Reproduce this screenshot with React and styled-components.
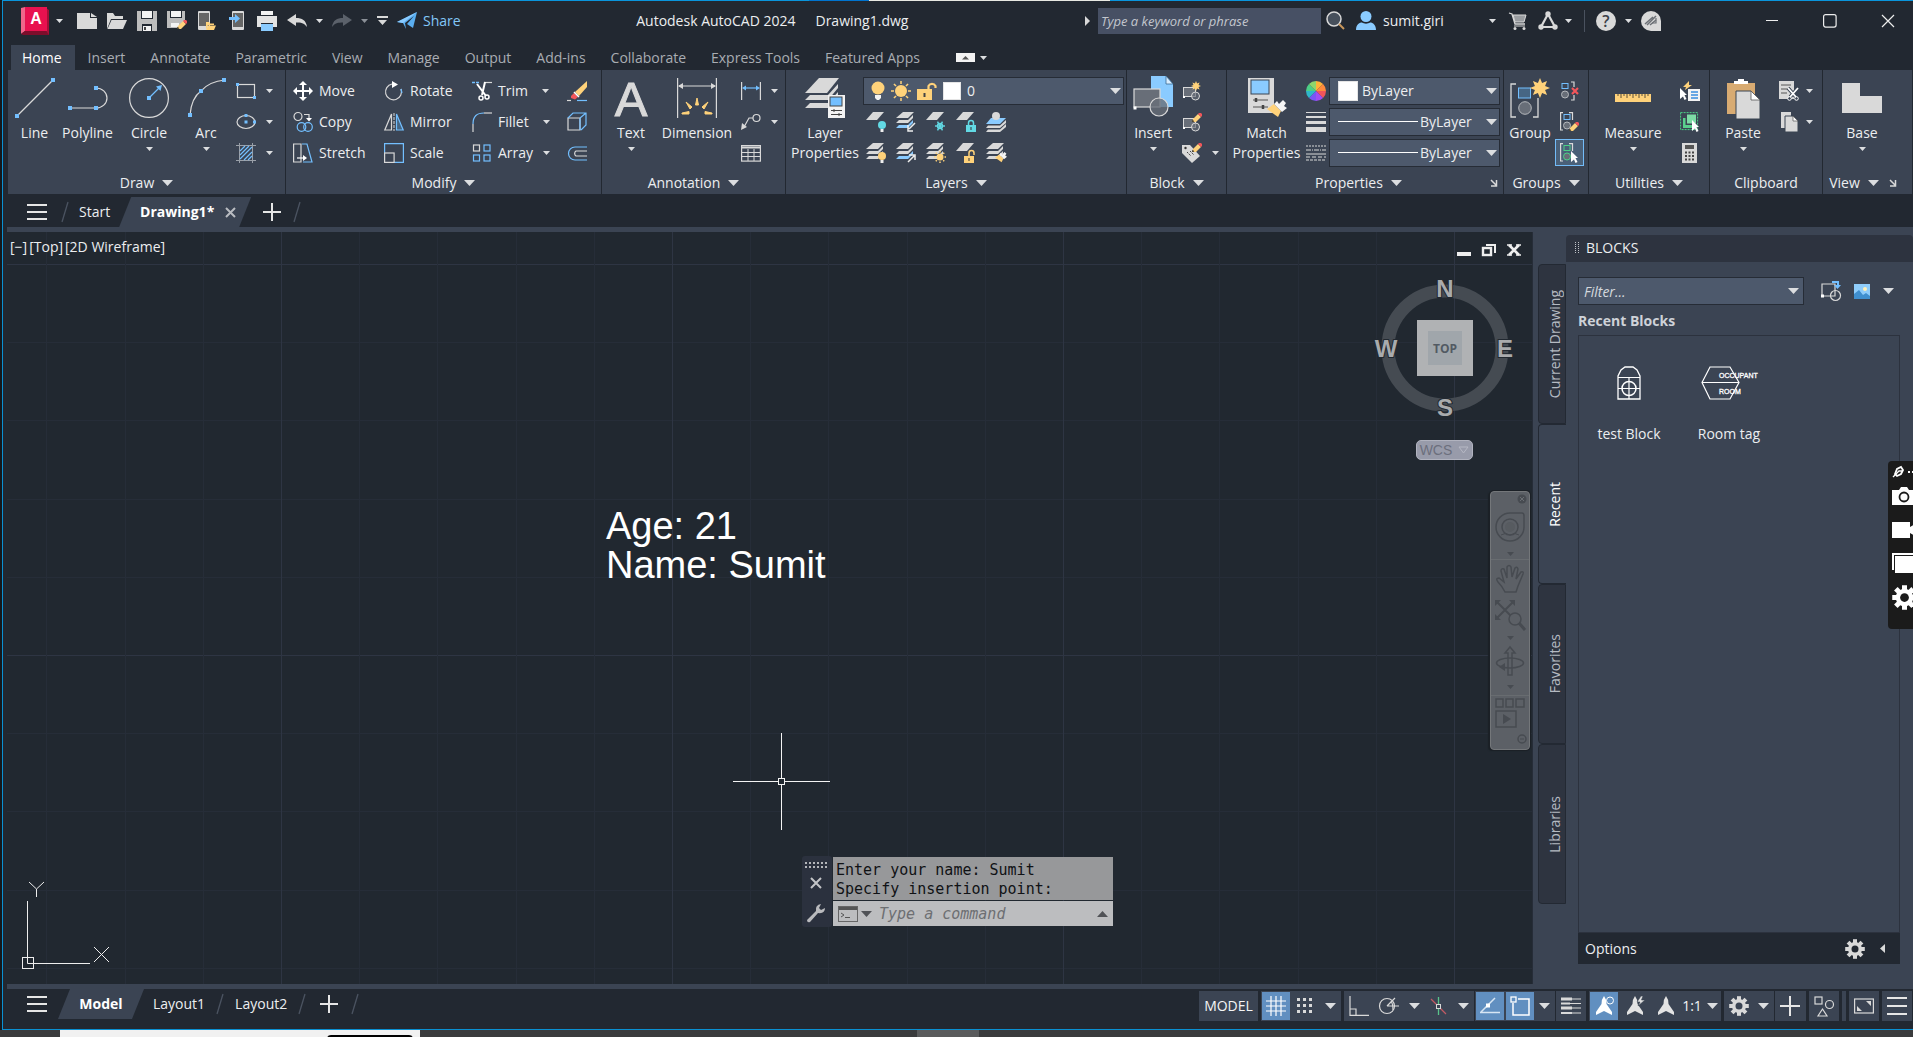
import React from "react";
import styled, { createGlobalStyle, css } from "styled-components";

const G = "#d9d9d9";
const B = "#73bfff";
const Y = "#ffd27a";
const DARK = "#222831";
const PANEL = "#3b4453";
const FIELD = "#4d596c";

const Global = createGlobalStyle`
  * { box-sizing: border-box; }
  html, body { margin: 0; height: 100%; background: #15181b; overflow: hidden; }
  body, button, input, select {
    font-family: "Open Sans", "Noto Sans", sans-serif;
    font-size: 14px;
    line-height: 20px;
    color: #eceef0;
  }
  svg { display: block; flex: none; overflow: visible; }
  ul { list-style: none; margin: 0; padding: 0; }
`;

/* ---------- shared pieces ---------- */

const Svg = ({ w = 20, h = w, children, ...rest }) => (
  <svg width={w} height={h} viewBox={`0 0 ${w} ${h}`} fill="none" aria-hidden="true" {...rest}>
    {children}
  </svg>
);

const Plain = styled.button`
  display: flex;
  align-items: center;
  justify-content: center;
  flex: none;
  padding: 0;
  border: 0;
  background: none;
  color: inherit;
  white-space: nowrap;
`;

const Caret = ({ size = "s", up, color = "#dcdee0" }) => {
  const w = size === "s" ? 7 : 11;
  const h = size === "s" ? 4 : 6;
  return (
    <Svg w={w} h={h}>
      <path d={up ? `M0 ${h}H${w}L${w / 2} 0Z` : `M0 0H${w}L${w / 2} ${h}Z`} fill={color} />
    </Svg>
  );
};

const Sq = ({ x, y, s = 4, c = B }) => <rect x={x - s / 2} y={y - s / 2} width={s} height={s} fill={c} />;

/* ---------- window frame ---------- */

const Screen = styled.div`
  display: flex;
  flex-direction: column;
  height: 100vh;
`;

const Window = styled.div`
  flex: 1;
  min-height: 0;
  display: flex;
  flex-direction: column;
  margin-left: 2px;
  padding-left: 4px;
  border-left: 1px solid #0a90d2;
  border-bottom: 1px solid #0a90d2;
  background: ${DARK};
`;

const TopEdge = styled.div`
  height: 1px;
  margin-left: -4px;
  background: linear-gradient(90deg, #0a95dc 806px, #0074d0 806px 866px, #e8e9e2 866px 1107px, #0a95dc 1107px);
`;

const Desktop = styled.div`
  display: flex;
  height: 7px;
  padding-left: 60px;
  background: #3a3b3c;
  overflow: hidden;
`;

const PeekWindow = styled.div`
  width: 360px;
  padding: 5px 7px 0;
  background: #f1f1f1;
  display: flex;
  justify-content: flex-end;
  margin-right: 497px;
`;

const PeekShape = styled.div`
  width: 86px;
  height: 8px;
  border-radius: 6px;
  background: #000;
`;

const PeekPatch = styled.div`
  width: 62px;
  background: #5a5b5c;
`;

/* ---------- title bar ---------- */

const TitleBar = styled.header`
  display: flex;
  align-items: center;
  height: 44px;
  padding: 0 0 4px 14px;
`;

const Group = styled.div`
  display: flex;
  align-items: center;
  flex: none;
  gap: ${(p) => p.$gap || 0}px;
  margin-left: ${(p) => p.$ml || 0}px;
`;

const AppTitle = styled.h1`
  flex: 1;
  display: flex;
  justify-content: center;
  gap: 20px;
  margin: 0;
  font-size: 14px;
  font-weight: 400;
  white-space: nowrap;
`;

const ShareButton = styled(Plain)`
  gap: 6px;
  color: #82c7f8;
`;

const SearchBox = styled.input`
  width: 223px;
  height: 26px;
  margin: 0 5px 0 7px;
  padding: 0 3px;
  border: 0;
  background: #475064;
  font-size: 13px;
  font-style: italic;
  &::placeholder { color: #c3c7ce; opacity: 1; }
`;

const UserButton = styled(Plain)`
  gap: 7px;
  width: 133px;
  margin: 0 0 0 10px;
  justify-content: flex-start;
`;

const Divider = styled.span`
  width: 1px;
  height: 22px;
  background: #4a525f;
`;

const WindowButtons = styled.div`
  display: flex;
  gap: 8px;
  margin-left: 86px;
`;

const WindowButton = styled(Plain)`
  width: 50px;
  height: 26px;
`;

const Logo = () => (
  <Svg w={28} h={28}>
    <path d="M0 1L4 0V24L0 27Z" fill="#f0668a" />
    <path d="M0 27L4 24H25L28 27V28H2Z" fill="#7d0d2b" />
    <path d="M25 1L28 3V28L25 24Z" fill="#a50f37" />
    <rect x="4" width="22" height="24" fill="#e8114f" />
    <text x="15" y="17" textAnchor="middle" fontFamily="Liberation Sans" fontWeight="700" fontSize="16" fill="#fff">A</text>
  </Svg>
);

const Pencil = ({ x, y }) => (
  <g transform={`translate(${x} ${y})`}>
    <path d="M0 9L1 6L6 1L9 4L4 9Z" fill={Y} />
    <path d="M6 1L7 0H9L10 1V3L9 4Z" fill="#f2555a" />
    <path d="M0 9L.6 6.8L2.4 8.6Z" fill="#222" />
  </g>
);

const Folder = ({ x, y, s = 1, c = Y }) => (
  <g transform={`translate(${x} ${y}) scale(${s})`}>
    <path d="M0 16V0H6L8 3H16V6H4Z" fill={c} />
    <path d="M4.500 7H20L16 16H.5Z" fill={c} />
  </g>
);

const quickIcons = [
  ["New", <Svg><path d="M0 2H13V7H20V18H0Z" fill={G} /><path d="M14 2L20 6H14Z" fill={G} /></Svg>],
  ["Open", <Svg><Folder x={0} y={2} c={G} /></Svg>],
  ["Save", <Svg><path d="M0 0H4V8H16V0H20V20H15V13H5V20H0Z" fill="#bdbdbd" /><path d="M5 0H15V7H5Z" fill="#f3f3f3" /><path d="M6 15H14V20H6Z" fill="#f3f3f3" /><path d="M7 16H9V19H7Z" fill="#444" /></Svg>],
  ["Save As", <Svg><path d="M0 0H3V7H15V0H18V9L12 17H0Z" fill="#bdbdbd" /><path d="M4 0H14V6H4Z" fill="#f3f3f3" /><path d="M4 12H12V16H4Z" fill="#f3f3f3" /><Pencil x={10} y={9} /></Svg>],
  ["Open from Web & Mobile", <Svg><rect x="1" y="0" width="12" height="19" rx="1" fill={G} /><rect x="2" y="2" width="10" height="13" fill="#666" /><Folder x={9} y={11} s={0.5} /></Svg>],
  ["Save to Web & Mobile", <Svg><rect x="5" y="0" width="12" height="19" rx="1" fill={G} /><rect x="6" y="2" width="10" height="14" fill="#666" /><path d="M2 6H8V3L13 7.500L8 12V9H2Z" fill={B} /></Svg>],
  ["Plot", <Svg><path d="M4 0H16V4H4Z" fill="#f3f3f3" /><path d="M0 5H20V16H16V12H4V16H0Z" fill="#e3e3e3" /><rect x="4" y="13" width="12" height="7" fill="#8acbff" /></Svg>],
];

const UndoIcon = ({ color = G, flip }) => (
  <Svg>
    <path transform={flip ? "translate(20 0) scale(-1 1)" : undefined} d="M0 9L9 3V7C15 7 19 9 20 16C17 12 14 11.500 9 11.500V15Z" fill={color} />
  </Svg>
);

const TitleBarView = () => (
  <TitleBar>
    <Group $gap={7}>
      <Plain aria-label="Application menu"><Logo /></Plain>
      <Plain aria-label="More commands"><Caret /></Plain>
    </Group>
    <Group $gap={10} $ml={14}>
      {quickIcons.map(([name, icon]) => <Plain key={name} aria-label={name}>{icon}</Plain>)}
    </Group>
    <Group $gap={9} $ml={10}>
      <Plain aria-label="Undo"><UndoIcon /></Plain>
      <Plain aria-label="Undo history"><Caret /></Plain>
      <Plain aria-label="Redo"><UndoIcon color="#5b616a" flip /></Plain>
      <Plain aria-label="Redo history"><Caret color="#8b9097" /></Plain>
      <Plain aria-label="Customize"><Svg w={11} h={10}><path d="M0 0H11V2H0Z M1 4H10L5.500 9Z" fill={G} /></Svg></Plain>
      <ShareButton>
        <Svg><path d="M0 11L20 1L16 17L10 13L17 5L8 12L9 18L6 12Z" fill="#5aaef0" /><path d="M0 11L20 1L6 12Z" fill="#8acbff" /></Svg>
        Share
      </ShareButton>
    </Group>
    <AppTitle><span>Autodesk AutoCAD 2024</span><span>Drawing1.dwg</span></AppTitle>
    <Group>
      <Plain aria-label="Collapse search"><Svg w={7} h={10}><path d="M1 0L6 5L1 10Z" fill={G} /></Svg></Plain>
      <SearchBox aria-label="Search" placeholder="Type a keyword or phrase" />
      <Plain aria-label="Find">
        <Svg><circle cx="8" cy="8" r="7" stroke={G} strokeWidth="1.500" fill="#47505c" /><path d="M13 13L18 18" stroke="#c9975b" strokeWidth="2" /></Svg>
      </Plain>
      <UserButton>
        <Svg><circle cx="10" cy="5.500" r="5.500" fill="#8acbff" /><path d="M0 19C0 13 4 11.500 6 11.500C8 13 12 13 14 11.500C17 11.500 20 14 20 19Z" fill="#8acbff" /></Svg>
        sumit.giri
      </UserButton>
      <Plain aria-label="Account menu"><Caret /></Plain>
    </Group>
    <Group $ml={12} $gap={10}>
      <Plain aria-label="App store">
        <Svg><path d="M1 2L4 3L7 13H17" stroke={G} strokeWidth="1.300" /><path d="M5 4H18L16 11H7Z" fill="#9a9da1" stroke={G} /><path d="M6 15H17" stroke={G} /><circle cx="7" cy="17.500" r="1.500" fill={G} /><circle cx="16" cy="17.500" r="1.500" fill={G} /></Svg>
      </Plain>
      <Group $gap={7}>
        <Plain aria-label="Autodesk account"><Svg><path d="M10 3L3 16H17Z" stroke={G} strokeWidth="2.200" /><circle cx="10" cy="3" r="2.700" fill={G} /><circle cx="3" cy="16" r="2.700" fill={G} /><circle cx="17" cy="16" r="2.700" fill={G} /></Svg></Plain>
        <Plain aria-label="Account links"><Caret /></Plain>
      </Group>
    </Group>
    <Group $ml={12} $gap={11}>
      <Divider />
      <Group $gap={9}>
        <Plain aria-label="Help"><Svg><circle cx="10" cy="10" r="10" fill={G} /><text x="10" y="16" textAnchor="middle" fontFamily="Open Sans" fontWeight="600" fontSize="16" fill="#3b4048">?</text></Svg></Plain>
        <Plain aria-label="Help menu"><Caret /></Plain>
        <Plain aria-label="Assistant"><Svg><path d="M10 0A10 10 0 0 1 20 10V20H10A10 10 0 0 1 10 0Z" fill={G} /><path d="M4 13L12 6M6 14L15 5M9 14L15 9" stroke="#6b6f75" strokeWidth="1.500" /><path d="M11 12H15V7" stroke="#6b6f75" strokeWidth="1.200" /></Svg></Plain>
      </Group>
    </Group>
    <WindowButtons>
      <WindowButton aria-label="Minimize"><Svg w={14}><path d="M1 6.500H13" stroke="#eee" /></Svg></WindowButton>
      <WindowButton aria-label="Maximize"><Svg w={14}><rect x=".6" y=".6" width="12.500" height="12.500" rx="2" stroke="#eee" strokeWidth="1.200" /></Svg></WindowButton>
      <WindowButton aria-label="Close"><Svg w={14}><path d="M1 1L13 13M13 1L1 13" stroke="#eee" strokeWidth="1.200" /></Svg></WindowButton>
    </WindowButtons>
  </TitleBar>
);

/* ---------- ribbon tabs ---------- */

const TabStrip = styled.nav`
  display: flex;
  align-items: stretch;
  gap: 1px;
  height: 25px;
  padding-left: 4px;
`;

const RibbonTab = styled(Plain)`
  padding: 0 12px;
  ${(p) => p.$on ? css`
    padding: 0 13px 0 11px;
    background: ${PANEL};
    color: #fff;
  ` : css`color: #a9adb3;`}
`;

const RibbonToggle = styled(Plain)`
  gap: 5px;
  margin-left: 23px;
`;

const tabNames = ["Home", "Insert", "Annotate", "Parametric", "View", "Manage", "Output", "Add-ins", "Collaborate", "Express Tools", "Featured Apps"];

/* ---------- ribbon ---------- */

const Ribbon = styled.section`
  display: flex;
  height: 124px;
  margin-left: 1px;
  background: ${PANEL};
`;

const PanelBox = styled.div`
  flex: ${(p) => (p.$grow ? 1 : 0)} 1 ${(p) => p.$w}px;
  min-width: 0;
  display: flex;
  flex-direction: column;
  border-right: 1px solid ${DARK};
`;

const PanelBody = styled.div`
  display: flex;
  height: 98px;
  padding: 5px 0 0 ${(p) => p.$pad}px;
`;

const PanelTitle = styled.div`
  display: flex;
  align-items: center;
  justify-content: center;
  gap: 8px;
  height: 26px;
  padding: 4px 0 0;
`;

const Launcher = styled(Plain)`
  margin: 0 ${(p) => p.$mr || 0}px 0 ${(p) => p.$ml || 0}px;
`;

const LaunchIcon = () => (
  <Svg w={8}><path d="M1 1L6 6M6.500 1V7H1" stroke={G} strokeWidth="1.500" /></Svg>
);

const TitleText = styled(Plain)`
  gap: 8px;
`;

const TitleFill = styled(TitleText)`
  flex: 1;
  padding-left: 8px;
`;

const Big = styled(Plain)`
  flex-direction: column;
  justify-content: flex-start;
  width: ${(p) => p.$w}px;
  height: 93px;
  padding-top: 3px;
  > svg:first-child { margin-bottom: 5px; }
  > svg + span + svg { margin-top: 4px; }
`;

const BigLabel = styled.span`
  line-height: 20px;
  white-space: pre-line;
`;

const Stack = styled.div`
  display: grid;
  grid-template-rows: repeat(3, 31px);
  margin-left: ${(p) => p.$ml || 0}px;
  width: ${(p) => (p.$w ? `${p.$w}px` : "auto")};
  flex: ${(p) => (p.$grow ? 1 : "none")};
`;

const Row = styled.div`
  display: flex;
  align-items: center;
  gap: ${(p) => p.$gap || 0}px;
  padding-left: ${(p) => p.$pl || 0}px;
`;

const Tool = styled(Plain)`
  gap: 6px;
`;

const PressedTool = styled(Plain)`
  width: 29px;
  height: 27px;
  margin-left: -5px;
  border: 1px solid #73bcf8;
  background: #4a6078;
`;

const Combo = styled.div`
  display: flex;
  align-items: center;
  width: ${(p) => (p.$w ? `${p.$w}px` : "auto")};
  flex: ${(p) => (p.$w ? "none" : 1)};
  height: 28px;
  padding: 0 ${(p) => p.$pr || 2}px 0 ${(p) => p.$pl}px;
  gap: ${(p) => p.$gap || 5}px;
  border: 1px solid #262c36;
  background: ${FIELD};
`;

const Select = styled.select`
  appearance: none;
  flex: 1;
  min-width: 0;
  height: 26px;
  padding: 0;
  border: 0;
  outline: 0;
  background: none;
`;

const Swatch = styled.span`
  width: ${(p) => p.$s}px;
  height: ${(p) => p.$s}px;
  background: #fff;
  border: 1px solid #e5e5e5;
`;

const LineSample = styled.span`
  width: 80px;
  height: 1px;
  background: #fff;
`;

const BigTool = ({ w, icon, label, menu }) => (
  <Big $w={w}>
    {icon}
    <BigLabel>{label}</BigLabel>
    {menu && <Caret />}
  </Big>
);

const SmallTool = ({ name, icon, text, gap = 10, menu }) => (
  <Row $gap={gap}>
    <Tool aria-label={name}>{icon}{text}</Tool>
    {menu && <Plain aria-label={`${name} options`}><Caret /></Plain>}
  </Row>
);

const Panel = ({ w, grow, pad, title, menu = true, launch, launchOnEdge, children }) => (
  <PanelBox $w={w} $grow={grow}>
    <PanelBody $pad={pad}>{children}</PanelBody>
    <PanelTitle>
      {launchOnEdge ? <TitleFill>{title}<Caret size="l" /></TitleFill> : <TitleText>{title}{menu && <Caret size="l" />}</TitleText>}
      {launchOnEdge && <Launcher $mr={5} aria-label={`${title} settings`}><LaunchIcon /></Launcher>}
      {launch && <Launcher $ml={2} $mr={9} aria-label={`${title} settings`}><LaunchIcon /></Launcher>}
    </PanelTitle>
  </PanelBox>
);

const line = { stroke: G, strokeWidth: 1.2 };
const blue = { stroke: B, strokeWidth: 1.2 };

const LineI = () => <Svg w={40}><path d="M2 38L38 2" {...line} /><Sq x={2} y={38} /><Sq x={38} y={2} /></Svg>;
const PolyI = () => <Svg w={40}><path d="M2 30H28A11 10 0 0 0 28 10" {...line} /><Sq x={2} y={30} /><Sq x={28} y={30} /><Sq x={28} y={10} /></Svg>;
const CircleI = () => <Svg w={40}><circle cx="20" cy="20" r="19.400" {...line} /><path d="M20 20L31 9" {...blue} /><path d="M33 7L31.500 13L27 8.500Z" fill={B} /><Sq x={20} y={20} /></Svg>;
const ArcI = () => <Svg w={40}><path d="M4 37C5 25 8 18 15 13C21 6 28 3 39 2" {...line} /><Sq x={4} y={37} /><Sq x={15} y={13} /><Sq x={38} y={2} /></Svg>;
const RectI = () => <Svg><rect x="1.500" y="3.500" width="17" height="13" {...line} /><Sq x={1.5} y={3.5} s={3} /><Sq x={18.5} y={16.5} s={3} /></Svg>;
const EllipseI = () => <Svg><ellipse cx="10" cy="10" rx="9" ry="6.500" {...line} /><Sq x={10} y={3.500} s={3} /><Sq x={10} y={10} s={3} /><Sq x={18.5} y={10} s={3} /></Svg>;
const HatchI = () => <Svg><path d="M3.500 0V20M16.500 0V20M0 2.500H20M0 17.500H20" stroke="#9aa0a8" /><path d="M4 8L9 3M4 12L13 3M4 16L16 4M8 17L16 9M12 17L16 13" {...blue} /></Svg>;

const MoveI = () => <Svg><path d="M10 2V18M2 10H18" stroke="#fff" strokeWidth="2" /><path d="M10 0L14 4H6ZM10 20L14 16H6ZM0 10L4 6V14ZM20 10L16 6V14Z" fill="#fff" /></Svg>;
const CopyI = () => <Svg><circle cx="5" cy="4.500" r="4" {...line} /><path d="M11 2.500H16V7" {...line} /><path d="M13 6H19L16 9.500Z" fill="#fff" /><circle cx="8.500" cy="15" r="4.300" {...blue} /><circle cx="15" cy="15" r="4.300" {...blue} /></Svg>;
const StretchI = () => <Svg><path d="M.6 1H8V19H.6Z" {...line} /><path d="M9 1H14L19 19H10" {...blue} /><path d="M4 15H12" stroke="#fff" strokeWidth="1.200" /><path d="M10 12L14 15L10 18Z" fill="#fff" /></Svg>;
const RotateI = () => <Svg><path d="M8 3A8 8 0 1 0 17 8" {...line} /><path d="M17 8L18 12" {...blue} /><path d="M8 0L14 3.500L8 7Z" fill="#fff" /></Svg>;
const MirrorI = () => <Svg><path d="M7.500 2V18H.8Z" {...line} /><path d="M10 1V19" stroke={G} strokeDasharray="3 1" /><path d="M12.500 2V18H19.200Z" fill="#466684" {...blue} /></Svg>;
const ScaleI = () => <Svg><path d="M.6 10V.6H19.400V19.400H10" {...blue} /><rect x=".6" y="10" width="9.500" height="9.400" {...line} /></Svg>;
const TrimI = () => <Svg><path d="M0 1.500H8" stroke={B} strokeDasharray="3 1" strokeWidth="1.500" /><path d="M12 1.500H20" {...line} /><path d="M5 3L14 15M13 1L10 14" stroke="#fff" strokeWidth="2" /><circle cx="9" cy="17" r="2" stroke="#fff" strokeWidth="1.500" /><circle cx="15" cy="16" r="2" stroke="#fff" strokeWidth="1.500" /></Svg>;
const FilletI = () => <Svg><path d="M1 12V20" {...line} /><path d="M1 12C1 4 5 1 12 1" {...blue} /><path d="M12 1H20" {...line} /></Svg>;
const ArrayI = () => <Svg><rect x="1.500" y="2" width="6" height="6" {...line} /><rect x="12" y="2" width="6" height="6" {...blue} /><rect x="1.500" y="12" width="6" height="6" {...blue} /><rect x="12" y="12" width="6" height="6" {...blue} /></Svg>;
const EraseI = () => <Svg><path d="M20 0V6L12 15L8 11Z" fill={Y} /><path d="M7 12L11 16L8 18.500L4 17V15Z" fill="#f2555a" /><path d="M7 11L12 16" stroke="#fff" strokeWidth="1.500" /><path d="M0 19.500H4" {...line} /><path d="M10 19.500H20" {...blue} /></Svg>;
const ExplodeI = () => <Svg><path d="M1 6H13V18H1Z" {...line} /><path d="M1 6L6 1H19V13L14 18M13 6L19 1M13 6V18" {...blue} /></Svg>;
const OffsetI = () => <Svg><path d="M20 4H8A6 6 0 0 0 8 17H20" {...blue} /><path d="M20 8H9A3 3 0 0 0 9 13H20" {...line} /></Svg>;

const TextI = () => <Svg w={40}><text x="20" y="38" textAnchor="middle" fontFamily="Liberation Sans" fontSize="49" fill={G} stroke={G}>A</text></Svg>;
const DimI = () => (
  <Svg w={40}>
    <path d="M.6 0V40M39.400 0V40M2 8H38" {...line} />
    <path d="M1 8L6 5V11ZM39 8L34 5V11Z" fill={G} />
    <path d="M20 20L21.500 27H18.500ZM9 24L15 29L13 31ZM31 24L25 29L27 31ZM5 35L12 33.500V36H5ZM35 35L28 33.500V36H35Z" fill={Y} stroke={Y} />
  </Svg>
);
const LinearI = () => <Svg><path d="M.6 1V19M19.400 1V19" {...line} /><path d="M3 7H17" {...blue} /><path d="M1 7L5 4.500V9.500ZM19 7L15 4.500V9.500Z" fill={B} /></Svg>;
const LeaderI = () => <Svg><circle cx="15.500" cy="6" r="3.500" {...line} /><path d="M12 6H8L3 15" {...line} /><path d="M0 18L1 11L6 15Z" fill={G} /></Svg>;
const TableI = () => <Svg><rect x=".6" y="2.600" width="18.800" height="15.500" {...line} /><path d="M1 4.500H19" stroke={G} strokeWidth="2" /><path d="M1 9.500H19M1 13.500H19M7 6V18M13 6V18" stroke={G} /></Svg>;

const Stack3 = ({ b = G, children }) => (
  <Svg>
    <path d="M7 0H18L12 6H0Z" fill={G} />
    <path d="M0 11L3 8H12L17 3V6L12 11Z" fill={G} />
    <path d="M0 16L3 13H12L17 8V11L12 16Z" fill={b} />
    {children}
  </Svg>
);
const One = ({ children }) => <Svg><path d="M7 0H18L11 8H0Z" fill={G} />{children}</Svg>;
const Bulb = ({ x, y, c, s = 1 }) => <g transform={`translate(${x} ${y}) scale(${s})`}><circle cx="4" cy="4" r="4" fill={c} /><path d="M2.500 8H5.500V11H2.500Z" fill="#eee" /></g>;
const Lock = ({ x, y, c, open }) => <g transform={`translate(${x} ${y})`}><path d={open ? "M5 5V2A2.500 2.500 0 0 1 10 2V4" : "M2.500 5V3A2.500 2.500 0 0 1 7.500 3V5"} stroke={c} strokeWidth="1.500" /><rect y="5" width="10" height="7" fill={c} /><path d="M4.500 7H5.500V10H4.500Z" fill="#333" /></g>;
const Sun = ({ x, y, r, k }) => (
  <g transform={`translate(${x} ${y})`} stroke={Y} strokeWidth="1.500">
    <circle r={r} fill={Y} stroke="none" />
    {[0, 45, 90, 135, 180, 225, 270, 315].map((a) => <path key={a} d={`M${r + 1} 0H${k}`} transform={`rotate(${a})`} />)}
  </g>
);
const Flake = ({ x, y }) => <g stroke="#62d9e4" strokeWidth="1.400">{[0, 60, 120].map((a) => <path key={a} d="M-5 0H5" transform={`translate(${x} ${y}) rotate(${a})`} />)}<circle cx={x} cy={y} r="2.500" /></g>;
const C = "#62d9e4";

const LayerPropI = () => (
  <Svg w={40}>
    <path d="M14 0H34L22 15H0Z" fill={G} />
    <path d="M0 22L5 17H23L33 6V10L23 22Z" fill={G} />
    <path d="M0 30L5 25H23L33 14V18L23 30Z" fill={G} />
    <rect x="23" y="17" width="17" height="23" fill="#f3f3f3" />
    <rect x="25" y="19" width="12" height="9" fill={B} stroke="#444" />
    <path d="M26 32.500H37M26 36.500H37M29 31V34M34 35V38" stroke="#444" />
  </Svg>
);

const BlockSh = ({ children }) => <Svg><rect x="1.500" y="6.500" width="12" height="9" fill="#686e78" stroke={G} /><circle cx="13.500" cy="15" r="4" fill="#686e78aa" stroke={G} /><Sq x={2} y={16} s={2} c="#fff" />{children}</Svg>;
const InsertI = () => (
  <Svg w={40}>
    <path d="M18 -2H33L40 6V29H18Z" fill="#8acbff" />
    <path d="M33 -2L40 6H33Z" fill="#d7edff" stroke="#3b6a92" strokeWidth=".8" />
    <rect x="1" y="11" width="26" height="18" fill="#686e78" stroke={G} strokeWidth="1.200" />
    <circle cx="26" cy="29" r="9" fill="#686e78cc" stroke={G} strokeWidth="1.200" />
    <Sq x={2} y={30} s={3} c="#fff" />
  </Svg>
);
const Star = ({ x, y, r }) => {
  const pts = Array.from({ length: 16 }, (_, i) => {
    const a = (i * Math.PI) / 8;
    const q = i % 2 ? r * 0.55 : r;
    return `${x + q * Math.sin(a)},${y - q * Math.cos(a)}`;
  }).join(" ");
  return <polygon points={pts} fill={Y} />;
};
const Brush = ({ x, y, s = 1 }) => <g transform={`translate(${x} ${y}) scale(${s})`}><path d="M0 9L7 4L14 11L11 17Z" fill={Y} /><path d="M7 4L10 1L12 4L16 0L19 3L17 6L20 8L15 12Z" fill="#f5f5f5" /></g>;
const MatchI = () => (
  <Svg w={40}>
    <rect x="1" y="0" width="26" height="35" fill={G} />
    <rect x="4" y="2" width="18" height="14" fill="#8acbff" stroke="#3b4453" />
    <path d="M6 22H21M6 29H21" stroke="#555" strokeWidth="1.200" /><path d="M9 20V24M16 27V31" stroke="#444" strokeWidth="2.500" />
    <Brush x={20} y={22} />
  </Svg>
);
const WheelI = () => {
  const cols = ["#ffb238", "#ff8a3c", "#f2555a", "#a24df2", "#7a55f5", "#2fb7c9", "#4ccf86", "#8fd66c"];
  return (
    <Svg>
      {cols.map((c, i) => {
        const p = (k) => `${10 + 10 * Math.sin((k * Math.PI) / 4)} ${10 - 10 * Math.cos((k * Math.PI) / 4)}`;
        return <path key={c} d={`M10 10L${p(i)}A10 10 0 0 1 ${p(i + 1)}Z`} fill={c} />;
      })}
    </Svg>
  );
};
const WeightI = () => <Svg><path d="M0 .5H20" stroke={G} /><path d="M0 5H20" stroke={G} strokeWidth="2" /><path d="M0 10.500H20" stroke={G} strokeWidth="3" /><path d="M0 17.500H20" stroke={G} strokeWidth="5" /></Svg>;
const TypeI = () => <Svg><path d="M0 3H20" stroke={G} strokeDasharray="2 1" /><path d="M0 7H20" stroke={G} strokeDasharray="5 1 1 1" /><path d="M0 11H20" stroke={G} /><path d="M0 14H20" stroke={G} strokeDasharray="4 2" /><path d="M0 17H20" stroke={G} strokeDasharray="3 1" /></Svg>;
const Cursor = ({ x, y }) => <path transform={`translate(${x} ${y})`} d="M0 0L7 7H4.500L6.500 11L4.500 12L3 8.500L0 11Z" fill="#fff" />;

const GroupI = () => (
  <Svg w={40}>
    <path d="M6 6H1V39H6M23 39H28V20" stroke={G} strokeWidth="1.300" />
    <rect x="8.500" y="10" width="12" height="10" fill="#466684" stroke={B} />
    <circle cx="15" cy="30" r="6.300" fill="#686e78" stroke="#b5b8bc" />
    <Star x={30} y={10} r={10} />
  </Svg>
);
const Members = ({ x = 4, box = B, ring = "#b5b8bc" }) => (
  <>
    <rect x={x} y="2.500" width="6" height="5" stroke={box} />
    <circle cx={x + 3} cy="13.500" r="3.500" fill="#686e78" stroke={ring} />
  </>
);
const UngroupI = () => <Svg><Members x={2} /><path d="M11 1H14V6M14 14V19H11" {...line} /><path d="M12 7L18 13M18 7L12 13" stroke="#f2555a" strokeWidth="2.200" /></Svg>;
const GroupEditI = () => <Svg><Members /><path d="M3 .6H.6V18H3M9 .6H12.500V8" {...line} /><Pencil x={9} y={10} /></Svg>;
const GroupSelI = () => <Svg><Members box="#4ccf86" ring="#4ccf86" /><path d="M3 .6H.6V18H3M9 .6H12.500V8" {...line} /><Cursor x={11} y={8} /></Svg>;

const RulerI = () => <Svg w={40}><rect x="2" y="16" width="36" height="8" fill={Y} /><path d="M5 16V18M8 16V20M11 16V18M14 16V20M17 16V18M20 16V20M23 16V18M26 16V20M29 16V18M32 16V20M35 16V18" stroke="#5d5138" /></Svg>;
const QuickSelI = () => <Svg><path d="M9 0L3 6H6L5 9L12 4H9Z" fill={Y} /><rect x="8" y="8" width="12" height="12" fill="#f3f3f3" /><path d="M11 11H18M11 14H18M11 17H18" stroke="#3b8fe0" strokeWidth="1.500" /><Cursor x={0} y={7} /></Svg>;
const SelAllI = () => <Svg><rect x=".6" y=".6" width="17" height="17" stroke="#4ccf86" strokeDasharray="2 1" /><path d="M3 6H5.500V13H13V16H3Z" fill="#59d08c" /><rect x="7" y="2.500" width="9" height="9" fill="#7ddca5" /><Cursor x={12} y={8} /></Svg>;
const CalcI = () => <Svg><rect x="2" width="15" height="20" fill={G} /><rect x="5" y="2" width="9" height="4" fill="#555" /><path d="M5 9.500H14M5 13H14M5 16.500H14" stroke="#444" strokeWidth="2.200" strokeDasharray="2 1.500" /></Svg>;
const PasteI = () => <Svg w={40}><rect x="4" y="5" width="28" height="31" fill="#d8ab72" /><path d="M11 3H15V1H21V3H25V6H11Z" fill="#fff" /><path d="M13 13H28L37 22V41H13Z" fill={G} stroke={PANEL} /><path d="M28 13V22H37Z" fill="#fff" stroke="#555" strokeWidth=".8" /></Svg>;
const CutI = () => <Svg><path d="M0 0H15V18H0Z" fill={G} /><path d="M2 4H12M2 8H12M2 12H8" stroke="#555" /><path d="M9 7L17 16M19 7L11 16" stroke={PANEL} strokeWidth="3.500" /><path d="M9 7L17 16M19 7L11 16" stroke="#fff" strokeWidth="1.800" /><circle cx="10.500" cy="17.500" r="1.800" stroke="#fff" fill={PANEL} /><circle cx="17.500" cy="17.500" r="1.800" stroke="#fff" /></Svg>;
const CopyClipI = () => <Svg><path d="M2 0H12V16H2Z" fill={G} /><path d="M6 4H14L19 9V20H6Z" fill={G} stroke={PANEL} /><path d="M14 4V9H19Z" fill="#fff" stroke="#555" strokeWidth=".7" /></Svg>;
const BaseI = () => <Svg w={40}><path d="M0 5H18V18H40V35H0Z" fill={G} /></Svg>;

const RibbonView = () => (
  <Ribbon>
    <Panel w={278} pad={4} title="Draw">
      <BigTool w={45} icon={<LineI />} label="Line" />
      <BigTool w={61} icon={<PolyI />} label="Polyline" />
      <BigTool w={62} icon={<CircleI />} label="Circle" menu />
      <BigTool w={52} icon={<ArcI />} label="Arc" menu />
      <Stack $ml={4}>
        <SmallTool name="Rectangle" icon={<RectI />} menu />
        <SmallTool name="Ellipse" icon={<EllipseI />} menu />
        <SmallTool name="Hatch" icon={<HatchI />} menu />
      </Stack>
    </Panel>

    <Panel w={316} pad={7} title="Modify">
      <Stack $w={91}>
        <SmallTool name="Move" icon={<MoveI />} text="Move" />
        <SmallTool name="Copy" icon={<CopyI />} text="Copy" />
        <SmallTool name="Stretch" icon={<StretchI />} text="Stretch" />
      </Stack>
      <Stack $w={88}>
        <SmallTool name="Rotate" icon={<RotateI />} text="Rotate" />
        <SmallTool name="Mirror" icon={<MirrorI />} text="Mirror" />
        <SmallTool name="Scale" icon={<ScaleI />} text="Scale" />
      </Stack>
      <Stack $w={95}>
        <SmallTool name="Trim" icon={<TrimI />} text="Trim" gap={14} menu />
        <SmallTool name="Fillet" icon={<FilletI />} text="Fillet" gap={14} menu />
        <SmallTool name="Array" icon={<ArrayI />} text="Array" gap={10} menu />
      </Stack>
      <Stack>
        <SmallTool name="Erase" icon={<EraseI />} />
        <SmallTool name="Explode" icon={<ExplodeI />} />
        <SmallTool name="Offset" icon={<OffsetI />} />
      </Stack>
    </Panel>

    <Panel w={184} pad={4} title="Annotation">
      <BigTool w={50} icon={<TextI />} label="Text" menu />
      <BigTool w={82} icon={<DimI />} label="Dimension" />
      <Stack $ml={3}>
        <SmallTool name="Linear" icon={<LinearI />} menu />
        <SmallTool name="Leader" icon={<LeaderI />} menu />
        <SmallTool name="Table" icon={<TableI />} />
      </Stack>
    </Panel>

    <Panel w={341} pad={2} title="Layers">
      <BigTool w={74} icon={<LayerPropI />} label={"Layer\nProperties"} />
      <Stack $ml={1} $grow>
        <Row>
          <Combo $w={261} $pl={7} $gap={6}>
            <Svg w={14} h={20}><circle cx="7" cy="7" r="6.500" fill={Y} /><path d="M4 14H10V17L8 19H6L4 17Z" fill="#f3f3f3" /></Svg>
            <Svg><Sun x={10} y={10} r={6} k={10} /></Svg>
            <Svg><path d="M11.500 9V5A4 4 0 0 1 18.500 5V7" stroke={Y} strokeWidth="2.200" /><rect x="0" y="8" width="15" height="11" fill={Y} /><path d="M6.500 12H8.500V16H6.500Z" fill="#444" /></Svg>
            <Swatch $s={18} />
            <Select aria-label="Layer"><option>0</option></Select>
            <Caret size="l" />
          </Combo>
        </Row>
        <Row $gap={10} $pl={3}>
          <Plain aria-label="Layer off"><One><Bulb x={12} y={9} c={C} /></One></Plain>
          <Plain aria-label="Layer isolate"><Stack3 b="#8acbff"><path d="M19 11L13 17M12 13V19H17" stroke="#eee" strokeWidth="1.500" /></Stack3></Plain>
          <Plain aria-label="Layer freeze"><One><Flake x={14} y={14} /></One></Plain>
          <Plain aria-label="Layer lock"><One><Lock x={10} y={8} c={C} /></One></Plain>
          <Plain aria-label="Make current"><Svg><path d="M5 6H20L14 12H0Z" fill="#8acbff" /><circle cx="10" cy="4" r="4" fill={G} /><path d="M0 16L2 13.500H14L20 8V11L14 16ZM0 20L2 17.500H14L20 12V15L14 20Z" fill={G} /></Svg></Plain>
        </Row>
        <Row $gap={10} $pl={3}>
          <Plain aria-label="Turn all layers on"><Stack3><Bulb x={12} y={9} c={Y} /></Stack3></Plain>
          <Plain aria-label="Layer unisolate"><Stack3 b="#8acbff"><path d="M12 19L18 13M13 12H19V17" stroke="#eee" strokeWidth="1.500" /></Stack3></Plain>
          <Plain aria-label="Thaw all layers"><Stack3><Sun x={14} y={14} r={3.5} k={6} /></Stack3></Plain>
          <Plain aria-label="Layer unlock"><One><Lock x={8} y={8} c={Y} open /></One></Plain>
          <Plain aria-label="Match layer"><Stack3><Brush x={9} y={9} s={0.6} /></Stack3></Plain>
        </Row>
      </Stack>
    </Panel>

    <Panel w={100} pad={4} title="Block">
      <BigTool w={44} icon={<InsertI />} label="Insert" menu />
      <Stack $ml={7}>
        <SmallTool name="Create" icon={<BlockSh><Star x={14} y={5} r={5} /></BlockSh>} />
        <SmallTool name="Edit" icon={<BlockSh><Pencil x={10} y={1} /></BlockSh>} />
        <SmallTool name="Edit attributes" icon={<Svg><path d="M0 2H8L18 13L10 20L0 10Z" fill={G} /><circle cx="3.500" cy="5" r="1.200" fill="#333" /><path d="M5 9L9 13M8 8L12 12" stroke="#444" strokeDasharray="2 1" /><Pencil x={10} y={0} /></Svg>} menu />
      </Stack>
    </Panel>

    <Panel w={277} pad={3} title="Properties" launchOnEdge>
      <BigTool w={73} icon={<MatchI />} label={"Match\nProperties"} />
      <Stack $ml={3} $grow>
        <Row $gap={3}><Plain aria-label="Object color"><WheelI /></Plain><Combo $w={171} $pl={8} $gap={4}><Swatch $s={20} /><Select aria-label="Color"><option>ByLayer</option></Select><Caret size="l" /></Combo></Row>
        <Row $gap={3}><Plain aria-label="Lineweight settings"><WeightI /></Plain><Combo $w={171} $pl={8} $gap={2}><LineSample /><Select aria-label="Lineweight"><option>ByLayer</option></Select><Caret size="l" /></Combo></Row>
        <Row $gap={3}><Plain aria-label="Linetype settings"><TypeI /></Plain><Combo $w={171} $pl={8} $gap={2}><LineSample /><Select aria-label="Linetype"><option>ByLayer</option></Select><Caret size="l" /></Combo></Row>
      </Stack>
    </Panel>

    <Panel w={85} pad={2} title="Groups">
      <BigTool w={48} icon={<GroupI />} label="Group" />
      <Stack $ml={6}>
        <SmallTool name="Ungroup" icon={<UngroupI />} />
        <SmallTool name="Group edit" icon={<GroupEditI />} />
        <Row><PressedTool aria-label="Group selection" aria-pressed="true"><GroupSelI /></PressedTool></Row>
      </Stack>
    </Panel>

    <Panel w={121} pad={10} title="Utilities">
      <BigTool w={68} icon={<RulerI />} label="Measure" menu />
      <Stack $ml={13}>
        <SmallTool name="Quick select" icon={<QuickSelI />} />
        <SmallTool name="Select all" icon={<SelAllI />} />
        <SmallTool name="Calculator" icon={<CalcI />} />
      </Stack>
    </Panel>

    <Panel w={113} pad={8} title="Clipboard" menu={false}>
      <BigTool w={50} icon={<PasteI />} label="Paste" menu />
      <Stack $ml={11}>
        <SmallTool name="Cut" icon={<CutI />} gap={7} menu />
        <SmallTool name="Copy clip" icon={<CopyClipI />} gap={7} menu />
      </Stack>
    </Panel>

    <Panel w={89} grow pad={14} title="View" launch>
      <BigTool w={50} icon={<BaseI />} label="Base" menu />
    </Panel>
  </Ribbon>
);

/* ---------- drawing and layout tabs ---------- */

const DocTabs = styled.nav`
  display: flex;
  align-items: flex-end;
  height: 33px;
  padding-left: 20px;
`;

const SlantShape = styled.div`
  display: flex;
  align-items: center;
  justify-content: center;
  gap: ${(p) => p.$gap || 0}px;
  width: ${(p) => p.$w}px;
  height: 30px;
  padding-left: ${(p) => p.$pl || 0}px;
  background: ${PANEL};
  clip-path: polygon(12px 0, 100% 0, calc(100% - 12px) 100%, 0 100%);
  button { font-weight: 700; color: #fff; }
`;

const DocTab = styled(Plain)`
  height: 30px;
  padding: 0 ${(p) => p.$pr || 0}px 0 ${(p) => p.$pl || 0}px;
`;

const Slash = () => <Svg w={8} h={30}><path d="M1 25L7 5" stroke="#4b5361" strokeWidth="1.300" /></Svg>;
const Burger = () => <Svg w={20} h={30}><path d="M0 8H20M0 15H20M0 22H20" stroke="#e6e6e6" strokeWidth="2" /></Svg>;
const Plus = () => <Svg w={18}><path d="M9 0V18M0 9H18" stroke="#e6e6e6" strokeWidth="2" /></Svg>;

/* ---------- workspace ---------- */

const Workspace = styled.main`
  flex: 1;
  min-height: 0;
  display: flex;
  border-top: 5px solid ${PANEL};
  border-bottom: 5px solid ${PANEL};
`;

const MINOR = "#262d38";
const MAJOR = "#2e3543";
const gridLines = `${MAJOR} 0 1px, transparent 1px 78px, ${MINOR} 78px 79px, transparent 79px 156px, ${MINOR} 156px 157px, transparent 157px 235px, ${MINOR} 235px 236px, transparent 236px 313px, ${MINOR} 313px 314px, transparent 314px 391px`;

const Canvas = styled.section`
  flex: 1;
  position: relative;
  overflow: hidden;
  background-color: #212830;
  background-image: linear-gradient(90deg, ${gridLines}), linear-gradient(180deg, ${gridLines});
  background-size: 391px 391px;
  background-position: 274px 32px;
`;

const ViewLabels = styled.div`
  position: absolute;
  left: 3px;
  top: 5px;
  display: flex;
  gap: 2px;
`;

const ViewControls = styled.div`
  position: absolute;
  right: 12px;
  top: 12px;
  display: flex;
  gap: 11px;
`;

const DrawingText = styled.p`
  position: absolute;
  left: 599px;
  top: 275px;
  margin: 0;
  font: 38px/39px "Liberation Sans", Arial, sans-serif;
  color: #fff;
  white-space: pre;
`;

const Crosshair = styled.div`
  position: absolute;
  left: 726px;
  top: 501px;
`;

const Ucs = styled.div`
  position: absolute;
  left: 14px;
  bottom: 13px;
`;

const CubeBox = styled.div`
  position: absolute;
  right: 17px;
  top: 42px;
`;

const WcsButton = styled.button`
  position: absolute;
  right: 60px;
  top: 208px;
  display: flex;
  align-items: center;
  justify-content: center;
  gap: 6px;
  width: 57px;
  height: 20px;
  padding: 0;
  border: 1px solid #b1b3bf;
  border-radius: 5px;
  background: #989baa;
  color: #6c6f7d;
  font: 14px/18px "Liberation Sans", Arial, sans-serif;
`;

const NavBar = styled.div`
  position: absolute;
  right: 3px;
  top: 259px;
  width: 40px;
  height: 259px;
  border: 1px solid #74777a;
  border-radius: 4px;
  background: #5c6066;
  box-shadow: 0 0 0 1px #1b2026, -2px 1px 1px #1b2026;
  display: flex;
  flex-direction: column;
  align-items: center;
`;

const NavButton = styled(Plain)`
  width: 38px;
  height: ${(p) => p.$h}px;
  justify-content: ${(p) => p.$end ? "flex-end" : "center"};
  padding-right: ${(p) => p.$end ? 2 : 0}px;
  border-bottom: 1px solid ${(p) => p.$rule ? "#686c70" : "transparent"};
`;

const N = "#474b51";

const CommandBox = styled.form`
  position: absolute;
  left: 795px;
  bottom: 57px;
  display: flex;
  width: 311px;
  height: 71px;
`;

const CommandGrip = styled.div`
  display: flex;
  flex-direction: column;
  align-items: center;
  width: 30px;
  margin-right: 1px;
  padding: 6px 2px 0 0;
  border-radius: 3px;
  background: #2b313e;
`;

const GripClose = styled(Plain)`
  margin: 8px 0 14px;
`;

const CommandMain = styled.div`
  flex: 1;
  display: flex;
  flex-direction: column;
  gap: 1px;
  padding: 1px 0;
`;

const History = styled.output`
  height: 43px;
  padding: 4px 3px 0;
  background: #97989a;
  color: #101215;
  font: 15px/19px "DejaVu Sans Mono", monospace;
  white-space: pre;
`;

const CommandRow = styled.div`
  display: flex;
  align-items: center;
  gap: 3px;
  height: 25px;
  padding: 0 5px;
  background: #bcbdbf;
`;

const CommandInput = styled.input`
  flex: 1;
  min-width: 0;
  height: 23px;
  margin-left: 4px;
  padding: 0;
  border: 0;
  background: none;
  font: italic 15px/19px "DejaVu Sans Mono", monospace;
  color: #222;
  &::placeholder { color: #6d6f72; opacity: 1; }
`;

const CompassLetter = (props) => <text textAnchor="middle" fontFamily="Liberation Sans" fontWeight="700" fontSize="24" fill="#a9abad" {...props} />;

const CanvasView = () => (
  <Canvas aria-label="Drawing area">
    <ViewLabels>
      <Plain>[−]</Plain><Plain>[Top]</Plain><Plain>[2D Wireframe]</Plain>
    </ViewLabels>
    <ViewControls>
      <Plain aria-label="Minimize drawing"><Svg w={14} h={12}><path d="M0 8H14V12H0Z" fill="#eee" /></Svg></Plain>
      <Plain aria-label="Restore drawing"><Svg w={14} h={12}><rect x="1" y="4" width="8" height="7" stroke="#eee" strokeWidth="2.400" /><path d="M4 1H13V9" stroke="#eee" strokeWidth="2" /></Svg></Plain>
      <Plain aria-label="Close drawing"><Svg w={14} h={12}><path d="M2 1L12 11M12 1L2 11" stroke="#eee" strokeWidth="2.600" /><path d="M0 1H5M9 1H14M0 11H5M9 11H14" stroke="#eee" strokeWidth="1.500" /></Svg></Plain>
    </ViewControls>

    <DrawingText>{"Age: 21\nName: Sumit"}</DrawingText>

    <Crosshair>
      <Svg w={97}><path d="M48.500 0V45M48.500 52V97M0 48.500H45M52 48.500H97" stroke="#f4f4f4" /><rect x="45.500" y="45.500" width="6" height="6" stroke="#f4f4f4" /></Svg>
    </Crosshair>

    <Ucs>
      <Svg w={90} h={90}><path d="M6.500 20V82.500H69" stroke="#eee" /><rect x="1.500" y="76.500" width="11" height="11" stroke="#eee" /><path d="M8 1L15.500 8L23 1M15.500 8V16" stroke="#eee" /><path d="M73 66L88 81M88 66L73 81" stroke="#eee" /></Svg>
    </Ucs>

    <CubeBox>
      <Svg w={142} h={148}>
        <circle cx="71" cy="74" r="57" stroke="#454b52" strokeWidth="13" />
        <rect x="43" y="46" width="56" height="56" fill="#b0b2b4" />
        <rect x="54" y="57" width="34" height="34" fill="#a0a6ab" />
        <text x="71" y="79" textAnchor="middle" fontFamily="Open Sans" fontWeight="700" fontSize="12" fill="#525a63">TOP</text>
        <g stroke="#212830" strokeWidth="2" paintOrder="stroke">
          <CompassLetter x="71" y="23">N</CompassLetter>
          <CompassLetter x="71" y="142">S</CompassLetter>
          <CompassLetter x="12" y="83">W</CompassLetter>
          <CompassLetter x="131" y="83">E</CompassLetter>
        </g>
      </Svg>
    </CubeBox>
    <WcsButton>WCS<Svg w={11} h={8}><path d="M1 1H10L5.500 7Z" stroke="#b6b8c4" /></Svg></WcsButton>

    <NavBar>
      <NavButton $h={14} $end aria-label="Close bar"><Svg w={10}><circle cx="5" cy="5" r="4.500" fill={N} /><path d="M3 3L7 7M7 3L3 7" stroke="#6a6e73" /></Svg></NavButton>
      <NavButton $h={42} aria-label="Steering wheel"><Svg w={30}><path d="M15 1H27Q29 1 29 4V15A14 14 0 1 1 15 1Z" stroke={N} strokeWidth="1.500" /><circle cx="15" cy="15" r="8" stroke={N} strokeWidth="1.500" /><circle cx="15" cy="15" r="5" fill={N} opacity=".25" /><path d="M6 23Q10 20 15 23Q20 20 24 23" stroke={N} /></Svg></NavButton>
      <NavButton $h={12} $rule aria-label="Wheel options"><Caret color={N} /></NavButton>
      <NavButton $h={38} aria-label="Pan"><Svg w={30}><path d="M10 28Q7 22 3 18Q0 14 4 14L9 18L6 7Q6 4 9 5L12 14L12 3Q14 0 16 3L17 13L20 4Q22 2 23 5L21 15L26 8Q29 7 28 10L23 22L21 28Z" stroke={N} strokeWidth="1.500" /></Svg></NavButton>
      <NavButton $h={34} aria-label="Zoom extents"><Svg w={30} h={30}><path d="M1 1L18 18M19 1L1 19" stroke={N} strokeWidth="2" /><path d="M0 0H6L0 6ZM20 0H14L20 6ZM0 20V14L6 20Z" fill={N} /><circle cx="20" cy="19" r="6" stroke={N} strokeWidth="1.500" fill="#5c6066" /><path d="M24 23L30 30" stroke={N} strokeWidth="3" /></Svg></NavButton>
      <NavButton $h={12} aria-label="Zoom options"><Caret color={N} /></NavButton>
      <NavButton $h={34} aria-label="Orbit"><Svg w={30}><path d="M13 29V7H10L15 1L20 7H17V29Z" stroke={N} strokeWidth="1.500" /><ellipse cx="15" cy="17" rx="13.500" ry="5" stroke={N} strokeWidth="1.500" /><path d="M4 21L10 17V25Z" fill={N} /></Svg></NavButton>
      <NavButton $h={18} $rule aria-label="Orbit options"><Caret color={N} /></NavButton>
      <NavButton $h={34} aria-label="Show motion"><Svg w={30}><rect x="1" y="1" width="7" height="8" stroke={N} strokeWidth="1.500" /><rect x="11" y="1" width="7" height="8" stroke={N} strokeWidth="1.500" /><rect x="21" y="1" width="8" height="8" stroke={N} strokeWidth="1.500" /><rect x="1" y="13" width="20" height="16" stroke={N} strokeWidth="1.500" /><path d="M8 16L16 21L8 26Z" fill={N} /></Svg></NavButton>
      <NavButton $h={18} $end aria-label="Bar options"><Svg w={10}><circle cx="5" cy="5" r="4" stroke={N} strokeWidth="1.500" /><path d="M3 5H7" stroke={N} /></Svg></NavButton>
    </NavBar>

    <CommandBox onSubmit={(e) => e.preventDefault()}>
      <CommandGrip>
        <Svg w={22} h={7}>{[0, 4, 8, 12, 16, 20].map((x) => <path key={x} d={`M${x} 0h2v2h-2zM${x} 4h2v2h-2z`} fill="#b4b6ba" />)}</Svg>
        <GripClose type="button" aria-label="Close command line"><Svg w={12}><path d="M1 1L11 11M11 1L1 11" stroke="#c3c4c7" strokeWidth="2" /></Svg></GripClose>
        <Plain type="button" aria-label="Command settings"><Svg w={20}><path d="M1 17L10 8Q9 2 15 1L13 5L15 7L19 5Q19 11 12 10L4 19Q1 20 1 17Z" fill="#b9babd" /></Svg></Plain>
      </CommandGrip>
      <CommandMain>
        <History>{"Enter your name: Sumit\nSpecify insertion point:"}</History>
        <CommandRow>
          <Svg w={20} h={16}><rect x=".5" y=".5" width="19" height="15" stroke="#666" /><path d="M1 1H19V4H1Z" fill="#555" /><path d="M3 7L6 9L3 11M7 11.500H12" stroke="#555" /></Svg>
          <Plain type="button" aria-label="Recent commands"><Caret size="l" color="#505256" /></Plain>
          <CommandInput aria-label="Command" placeholder="Type a command" />
          <Plain type="button" aria-label="Expand history"><Caret size="l" up color="#505256" /></Plain>
        </CommandRow>
      </CommandMain>
    </CommandBox>
  </Canvas>
);

/* ---------- blocks palette ---------- */

const Palette = styled.aside`
  position: relative;
  flex: none;
  width: 380px;
  display: flex;
  padding: 3px 0 0 5px;
  background: ${PANEL};
`;

const SideTabs = styled.div`
  display: flex;
  flex-direction: column;
  width: 28px;
  padding-top: 29px;
`;

const SideTab = styled(Plain)`
  height: 160px;
  padding-left: 5px;
  border: 1px solid #232933;
  border-right: ${(p) => (p.$on ? "0" : "1px solid #232933")};
  border-top-left-radius: 4px;
  border-bottom-left-radius: 4px;
  background: ${(p) => (p.$on ? PANEL : "#2e3440")};
  color: ${(p) => (p.$on ? "#fff" : "#b5bac2")};
  span {
    writing-mode: vertical-rl;
    transform: rotate(180deg);
  }
`;

const PaletteMain = styled.div`
  flex: 1;
  min-width: 0;
  display: flex;
  flex-direction: column;
`;

const PaletteHeader = styled.h2`
  display: flex;
  align-items: center;
  gap: 7px;
  height: 27px;
  margin: 0;
  padding: 0 0 2px 9px;
  border-radius: 4px 4px 0 0;
  background: #2d333f;
  font-size: 14px;
  font-weight: 400;
`;

const FilterRow = styled.div`
  display: flex;
  align-items: center;
  height: 28px;
  margin: 15px 19px 0 12px;
`;

const FilterInput = styled.input`
  flex: 1;
  min-width: 0;
  height: 26px;
  padding: 0;
  border: 0;
  background: none;
  font-style: italic;
  &::placeholder { color: #d5d9de; opacity: 1; }
`;

const SectionTitle = styled.h3`
  margin: 6px 12px;
  font-size: 14px;
  line-height: 20px;
  font-weight: 700;
  color: #ced2d8;
`;

const BlockList = styled.ul`
  flex: 1;
  display: flex;
  align-content: flex-start;
  margin: -2px 13px 0 12px;
  border: 1px solid #2c323e;
`;

const BlockItem = styled(Plain)`
  flex-direction: column;
  gap: 24px;
  width: 100px;
  padding-top: 30px;
`;

const OptionsBar = styled.footer`
  display: flex;
  align-items: center;
  height: 31px;
  margin: 0 13px 20px 12px;
  padding: 0 15px 0 7px;
  background: ${DARK};
  span { flex: 1; }
`;

const Recorder = styled.div`
  position: absolute;
  right: 0;
  top: 229px;
  width: 25px;
  height: 168px;
  padding: 5px 0 0 4px;
  border-radius: 4px 0 0 4px;
  background: #1b1b1b;
  overflow: hidden;
  display: flex;
  flex-direction: column;
  align-items: flex-start;
`;

const RecorderButton = styled(Plain)`
  width: 25px;
  height: ${(p) => p.$h}px;
`;

const Gear = ({ s = 20, c = G, hole = DARK }) => (
  <svg width={s} height={s} viewBox="-10 -10 20 20" aria-hidden="true">
    {[0, 45, 90, 135].map((a) => <rect key={a} x="-2" y="-9.800" width="4" height="19.600" fill={c} transform={`rotate(${a})`} />)}
    <circle r="7" fill={c} /><circle r="3.500" fill={hole} />
  </svg>
);

const PaletteView = () => (
  <Palette>
    <SideTabs role="tablist">
      {["Current Drawing", "Recent", "Favorites", "Libraries"].map((t) => (
        <SideTab key={t} role="tab" $on={t === "Recent"} aria-selected={t === "Recent"}><span>{t}</span></SideTab>
      ))}
    </SideTabs>
    <PaletteMain>
      <PaletteHeader>
        <Svg w={4} h={11}><path d="M.5 0V11M3.500 0V11" stroke="#c0c3c8" strokeDasharray="1 1" /></Svg>
        BLOCKS
      </PaletteHeader>
      <FilterRow>
        <Combo $pl={5} $pr={4}>
          <FilterInput aria-label="Filter blocks" placeholder="Filter..." />
          <Caret size="l" />
        </Combo>
        <Group $ml={17} $gap={12}>
          <Plain aria-label="Insert from file"><Svg><path d="M1 3H14V15H1Z" {...line} /><circle cx="14.500" cy="14.500" r="5" {...line} /><path d="M11 1H17V4" {...blue} strokeWidth="2" /><path d="M13 4H20L16.500 8Z" fill={B} /><Sq x={1.5} y={15} s={3} c="#fff" /></Svg></Plain>
          <Plain aria-label="Thumbnail view"><Svg w={18}><rect x="1" y="2" width="16" height="15" fill="#8fcdfb" /><path d="M1 12L6 8L10 13L13 11L17 14V17H1Z" fill="#3f8fcf" /><circle cx="12" cy="7" r="2" fill="#fff0b8" /></Svg></Plain>
          <Plain aria-label="View options"><Caret size="l" /></Plain>
        </Group>
      </FilterRow>
      <SectionTitle>Recent Blocks</SectionTitle>
      <BlockList>
        <li>
          <BlockItem>
            <Svg w={24} h={34}><path d="M1 33V10L4 4L8 1H16L20 4L23 10V33Z" stroke="#fff" strokeWidth="1.300" /><path d="M1 11.500H23M12 11V33M1 22.500H23" stroke="#fff" strokeWidth="1.200" /><circle cx="12" cy="22.500" r="7" stroke="#fff" strokeWidth="1.500" /></Svg>
            test Block
          </BlockItem>
        </li>
        <li>
          <BlockItem>
            <Svg w={56} h={34}>
              <path d="M1 16.500L9 1H29L38 16.500L29 33H9ZM1 16.500H38" stroke="#fff" strokeWidth="1.200" />
              <text x="18" y="12" fontFamily="Liberation Sans" fontSize="7" fill="#fff" stroke="#fff" strokeWidth=".3">OCCUPANT</text>
              <text x="18" y="28" fontFamily="Liberation Sans" fontSize="7" fill="#fff" stroke="#fff" strokeWidth=".3">ROOM</text>
            </Svg>
            Room tag
          </BlockItem>
        </li>
      </BlockList>
      <OptionsBar>
        <span>Options</span>
        <Group $gap={15}>
          <Plain aria-label="Palette settings"><Gear /></Plain>
          <Plain aria-label="Collapse"><Svg w={5} h={9}><path d="M5 0V9L0 4.500Z" fill={G} /></Svg></Plain>
        </Group>
      </OptionsBar>
    </PaletteMain>
    <Recorder>
      <RecorderButton $h={12} aria-label="Pin"><Svg w={24} h={12}><path d="M2 8L4 3L8 1L10 4L8 8L4 10Z" stroke="#fff" strokeWidth="1.800" /><path d="M0 11L6 5H9" stroke="#fff" strokeWidth="1.300" /><path d="M15 5H17V7H15ZM19 5H21V7H19Z" fill="#fff" /></Svg></RecorderButton>
      <RecorderButton $h={36} aria-label="Screenshot"><Svg w={25} h={18}><path d="M0 3H7L9 0H15L17 3H25V18H0Z" fill="#fff" /><circle cx="12" cy="10" r="4.500" stroke="#1b1b1b" strokeWidth="1.800" /></Svg></RecorderButton>
      <RecorderButton $h={32} aria-label="Record"><Svg w={25} h={16}><path d="M0 0H18V5L25 1V15L18 11V16H0Z" fill="#fff" /></Svg></RecorderButton>
      <RecorderButton $h={34} aria-label="Gallery"><Svg w={25} h={20}><path d="M0 17V0H25V2H2V17Z" fill="#fff" /><rect x="3" y="3" width="22" height="17" fill="#fff" /></Svg></RecorderButton>
      <RecorderButton $h={34} aria-label="Recorder settings"><Gear s={25} c="#fff" hole="#1b1b1b" /></RecorderButton>
    </Recorder>
  </Palette>
);

/* ---------- status bar ---------- */

const StatusBar = styled.footer`
  display: flex;
  justify-content: space-between;
  height: 40px;
  padding-left: 20px;
`;

const LayoutTabs = styled.nav`
  display: flex;
  height: 30px;
  align-items: center;
`;

const StatusTools = styled.div`
  display: flex;
  gap: 3px;
  padding: 2px 1px 0 0;
`;

const Cell = styled.div`
  display: flex;
  align-items: center;
  width: ${(p) => p.$w}px;
  height: 30px;
  padding: 1px;
  background: ${PANEL};
`;

const StatusButton = styled(Plain)`
  width: ${(p) => p.$w || 28}px;
  height: 28px;
  gap: 5px;
  background: ${(p) => (p.$on ? "#618fc0" : "none")};
  color: #f4f5f6;
`;

const TightCell = styled(Cell)`
  margin-left: -2px;
`;

const Person = ({ c = "#e3e3e3", children }) => <Svg><path d="M10 0Q13 4 12.500 8L18 16V19L10 15L2 19V16L7.500 8Q7 4 10 0Z" fill={c} />{children}</Svg>;

const StatusView = () => (
  <StatusBar>
    <LayoutTabs>
      <Plain aria-label="Layout menu"><Burger /></Plain>
      <Group $ml={11}><SlantShape $w={86}><Plain>Model</Plain></SlantShape></Group>
      <DocTab $pl={9} $pr={11}>Layout1</DocTab><Slash />
      <DocTab $pl={11} $pr={11}>Layout2</DocTab><Slash />
      <DocTab $pl={14} $pr={13} aria-label="New layout"><Plus /></DocTab><Slash />
    </LayoutTabs>
    <StatusTools>
      <Cell $w={59}><StatusButton $w={57}>MODEL</StatusButton></Cell>
      <Cell $w={80}>
        <StatusButton $on aria-label="Grid"><Svg><path d="M5 0V20M10 0V20M15 0V20M0 5H20M0 10H20M0 15H20" stroke="#fff" strokeWidth="1.200" /></Svg></StatusButton>
        <StatusButton aria-label="Snap" $w={30}><Svg w={16}>{[0, 6, 12].map((x) => [0, 6, 12].map((y) => <rect key={`${x}-${y}`} x={x} y={y} width="3" height="3" fill={G} />))}</Svg></StatusButton>
        <StatusButton $w={20} aria-label="Snap options"><Caret size="l" /></StatusButton>
      </Cell>
      <Cell $w={130}>
        <StatusButton aria-label="Ortho"><Svg><path d="M1 0V19.400H20M1 13H7V19" {...line} /></Svg></StatusButton>
        <StatusButton $w={32} aria-label="Polar"><Svg><circle cx="8" cy="10" r="7.500" {...line} /><path d="M8 10H20M8 10L16 2M12 5Q14 8 14 14" {...line} /></Svg></StatusButton>
        <StatusButton $w={18} aria-label="Polar options"><Caret size="l" /></StatusButton>
        <StatusButton $w={30} aria-label="Isometric"><Svg><path d="M3 3L18 18" stroke="#c25a64" strokeWidth="1.300" /><path d="M10.500 1V19" stroke="#59c48a" strokeWidth="1.300" /><rect x="8.500" y="8.500" width="4" height="4" stroke={G} fill={PANEL} /></Svg></StatusButton>
        <StatusButton $w={20} aria-label="Isometric options"><Caret size="l" /></StatusButton>
      </Cell>
      <TightCell $w={80}>
        <StatusButton $on aria-label="Object tracking"><Svg><path d="M0 16.500H20M1 16L15 2" stroke="#d7e5f3" strokeWidth="1.500" /><Sq x={8} y={9.500} c="#fff" /></Svg></StatusButton>
        <Group $ml={2}><StatusButton $on aria-label="Object snap"><Svg><path d="M8 3H19V19H3V7" stroke="#fff" strokeWidth="1.500" /><rect x="1" y="1" width="5" height="5" stroke="#fff" strokeWidth="1.300" /></Svg></StatusButton></Group>
        <StatusButton $w={20} aria-label="Object snap options"><Caret size="l" /></StatusButton>
      </TightCell>
      <TightCell $w={30}><StatusButton aria-label="Lineweight display"><Svg><path d="M0 3H11M0 12H11" stroke={G} strokeWidth="3" /><path d="M0 7.500H9M0 17H11" stroke={G} strokeWidth="2" /><path d="M11 3H20M9 7.500H20M11 12H20M11 17H20" stroke={G} strokeWidth="1.200" /></Svg></StatusButton></TightCell>
      <Cell $w={132}>
        <StatusButton $on aria-label="Annotation visibility"><Person c="#fff"><circle cx="16" cy="4.500" r="3.500" stroke="#fff" fill="#618fc0" /></Person></StatusButton>
        <StatusButton $w={34} aria-label="Auto scale"><Person><path d="M16 0L12 6H15L13 10L20 4H16.500L18 0Z" fill="#e3e3e3" stroke={PANEL} strokeWidth=".6" /></Person></StatusButton>
        <StatusButton aria-label="Annotation scale"><Person /></StatusButton>
        <StatusButton $w={40}>1:1<Caret size="l" /></StatusButton>
      </Cell>
      <Cell $w={50}>
        <StatusButton aria-label="Workspace"><Gear hole={PANEL} /></StatusButton>
        <StatusButton $w={20} aria-label="Workspace options"><Caret size="l" /></StatusButton>
      </Cell>
      <TightCell $w={31}><StatusButton aria-label="Annotation monitor"><Svg><path d="M10 0V20M0 10H20" stroke="#e6e6e6" strokeWidth="2" /></Svg></StatusButton></TightCell>
      <Cell $w={30}><StatusButton aria-label="Isolate objects"><Svg><rect x="1" y="1" width="7" height="7" {...line} /><circle cx="15.500" cy="8.500" r="4" {...line} /><path d="M8.500 13L13 20H4Z" {...line} /></Svg></StatusButton></Cell>
      <Cell $w={4} />
      <Cell $w={30}><StatusButton aria-label="Clean screen"><Svg><rect x=".6" y="3" width="18.800" height="14" {...line} /><path d="M12 5H17V10ZM3 10L8 15H3Z" fill={G} /></Svg></StatusButton></Cell>
      <Cell $w={30}><StatusButton aria-label="Customization"><Svg><path d="M0 2H20M0 10H20M0 18H20" stroke="#e6e6e6" strokeWidth="2" /></Svg></StatusButton></Cell>
    </StatusTools>
  </StatusBar>
);

export default function App() {
  return (
    <Screen>
      <Global />
      <Window>
        <TopEdge />
        <TitleBarView />
        <TabStrip>
          {tabNames.map((t) => <RibbonTab key={t} $on={t === "Home"}>{t}</RibbonTab>)}
          <RibbonToggle aria-label="Minimize ribbon">
            <Svg w={19} h={9}><rect width="19" height="9" fill="#f3f3f3" /><path d="M6 6.500H13L9.500 3Z" fill="#555" /></Svg>
            <Caret />
          </RibbonToggle>
        </TabStrip>
        <RibbonView />
        <DocTabs>
          <Plain aria-label="File menu"><Burger /></Plain>
          <Group $ml={14}><Slash /></Group>
          <DocTab $pl={10} $pr={9}>Start</DocTab>
          <SlantShape $w={132} $gap={11} $pl={6}>
            <Plain>Drawing1*</Plain>
            <Plain aria-label="Close tab"><Svg w={11}><path d="M1 1L10 10M10 1L1 10" stroke="#b9bcc1" strokeWidth="2" /></Svg></Plain>
          </SlantShape>
          <DocTab $pl={12} $pr={12} aria-label="New drawing"><Plus /></DocTab>
          <Slash />
        </DocTabs>
        <Workspace>
          <CanvasView />
          <PaletteView />
        </Workspace>
        <StatusView />
      </Window>
      <Desktop>
        <PeekWindow><PeekShape /></PeekWindow>
        <PeekPatch />
      </Desktop>
    </Screen>
  );
}
